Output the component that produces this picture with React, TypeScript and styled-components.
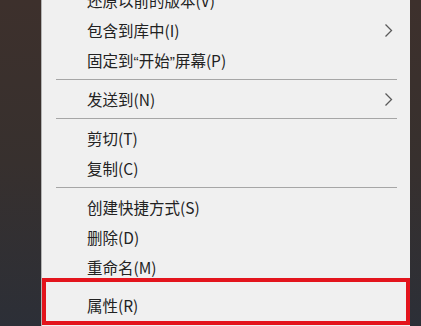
import React from 'react';
import styled, { createGlobalStyle } from 'styled-components';

const GlobalStyle = createGlobalStyle`
  html, body {
    margin: 0;
    padding: 0;
    height: 326px;
    overflow: hidden;
  }
  body {
    background: linear-gradient(180deg, #3d302c 0%, #37302e 50%, #2c2f37 100%);
    font-family: "Noto Sans CJK SC", "Noto Sans", sans-serif;
  }
`;

const Desktop = styled.div`
  width: 421px;
  height: 326px;
  overflow: hidden;
  padding-left: 41px;
  box-sizing: border-box;
`;

const Menu = styled.div`
  width: 369px;
  margin-top: -15px;
  background: #f0f0f0;
  border-left: 1px solid #b4b4b4;
  box-sizing: border-box;
  display: flex;
  flex-direction: column;
`;

const Item = styled.div<{ $gap?: number }>`
  position: relative;
  height: 30px;
  margin-top: ${p => p.$gap || 0}px;
  display: flex;
  align-items: center;
  justify-content: space-between;
  padding: 0 17px 0 45px;
  font-size: 15.5px;
  color: #222;
  white-space: nowrap;
`;

const Quote = styled.span`
  font-family: "Liberation Sans", sans-serif;
`;

const Separator = styled.div`
  height: 9px;
  display: flex;
  align-items: center;
  padding: 0 13px 0 14px;
  &::after {
    content: '';
    flex: 1;
    height: 1px;
    background: #a6a6a6;
  }
`;

const Highlight = styled.div`
  position: absolute;
  left: 0;
  right: 0;
  top: -12px;
  bottom: -5px;
  border: 4px solid #e3141c;
  pointer-events: none;
`;

const Chevron = () => (
  <svg width="9" height="15" viewBox="0 0 9 15">
    <path d="M1.5 1.5 L7.5 7.5 L1.5 13.5" fill="none" stroke="#5a5a5a" strokeWidth="1.3" />
  </svg>
);

type Entry = { label?: React.ReactNode; sub?: boolean; sep?: boolean };

const entries: Entry[] = [
  { label: '还原以前的版本(V)' },
  { label: '包含到库中(I)', sub: true },
  {
    label: (
      <>
        固定到<Quote>“</Quote>开始<Quote>”</Quote>屏幕(P)
      </>
    ),
  },
  { sep: true },
  { label: '发送到(N)', sub: true },
  { sep: true },
  { label: '剪切(T)' },
  { label: '复制(C)' },
  { sep: true },
  { label: '创建快捷方式(S)' },
  { label: '删除(D)' },
  { label: '重命名(M)' },
];

const App = () => (
  <>
    <GlobalStyle />
    <Desktop>
      <Menu>
        {entries.map((e, i) =>
          e.sep ? (
            <Separator key={i} />
          ) : (
            <Item key={i}>
              <span>{e.label}</span>
              {e.sub && <Chevron />}
            </Item>
          )
        )}
        <Item $gap={8}>
          <span>属性(R)</span>
          <Highlight />
        </Item>
        <Item />
      </Menu>
    </Desktop>
  </>
);

export default App;
